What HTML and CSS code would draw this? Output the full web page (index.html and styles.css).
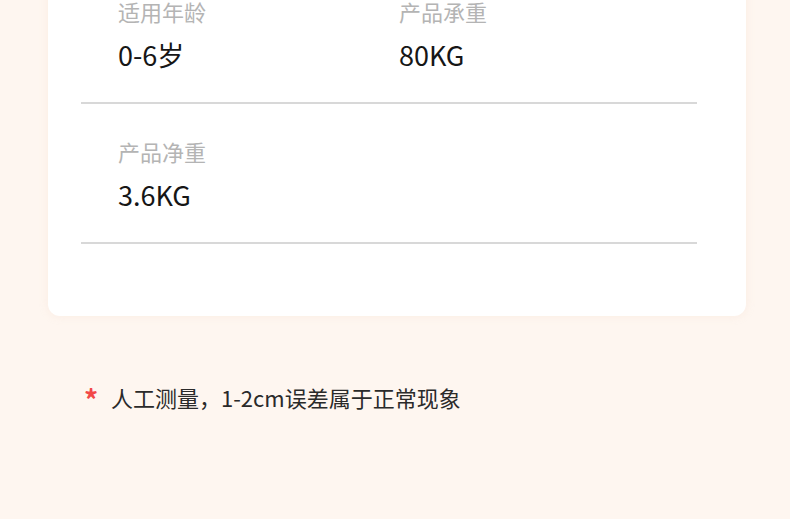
FILE: index.html
```html
<!DOCTYPE html>
<html lang="zh-CN">
<head>
    <meta charset="UTF-8">
    <meta name="viewport" content="width=device-width, initial-scale=1.0">
    <title>产品参数</title>
    <link rel="stylesheet" href="styles.css">
</head>
<body>
    <!-- 参数卡片 -->
    <div class="card">
        <div class="spec-row">
            <div class="spec">
                <div class="spec-label">适用年龄</div>
                <div class="spec-value">0-6岁</div>
            </div>
            <div class="spec">
                <div class="spec-label">产品承重</div>
                <div class="spec-value">80KG</div>
            </div>
        </div>
        <div class="spec-row">
            <div class="spec">
                <div class="spec-label">产品净重</div>
                <div class="spec-value">3.6KG</div>
            </div>
        </div>
    </div>

    <!-- 说明 -->
    <p class="note"><span class="note-star">*</span>人工测量，1-2cm误差属于正常现象</p>
</body>
</html>
```

FILE: styles.css
```css
/* Reset */
* {
    margin: 0;
    padding: 0;
    box-sizing: border-box;
}

body {
    min-height: 100vh;
    background: #fef6f0;
    font-family: "Noto Sans CJK SC", "Noto Sans", sans-serif;
    color: #222;
    overflow: hidden;
}

/* White card, its top runs above the window */
.card {
    margin: -36px 44px 0 48px;
    padding: 0 49px 72px 33px;
    background: #ffffff;
    border-radius: 0 0 12px 12px;
    box-shadow: 0 0 8px rgba(240, 210, 190, 0.25);
}

.spec-row {
    display: grid;
    grid-template-columns: 281px 1fr;
    padding: 32px 0 29px 37px;
    border-bottom: 2px solid #d8d8d8;
}

.spec-label {
    font-size: 22px;
    line-height: 30px;
    color: #b4b4b4;
}

.spec-value {
    margin-top: 11px;
    font-size: 27px;
    line-height: 36px;
    color: #161616;
}

/* Footnote */
.note {
    display: flex;
    align-items: flex-start;
    margin-top: 66px;
    padding-left: 84px;
    font-size: 22px;
    line-height: 30px;
    color: #2a2a2a;
}

.note-star {
    width: 27px;
    font-size: 28px;
    font-weight: bold;
    line-height: 34px;
    color: #f24848;
}
```
